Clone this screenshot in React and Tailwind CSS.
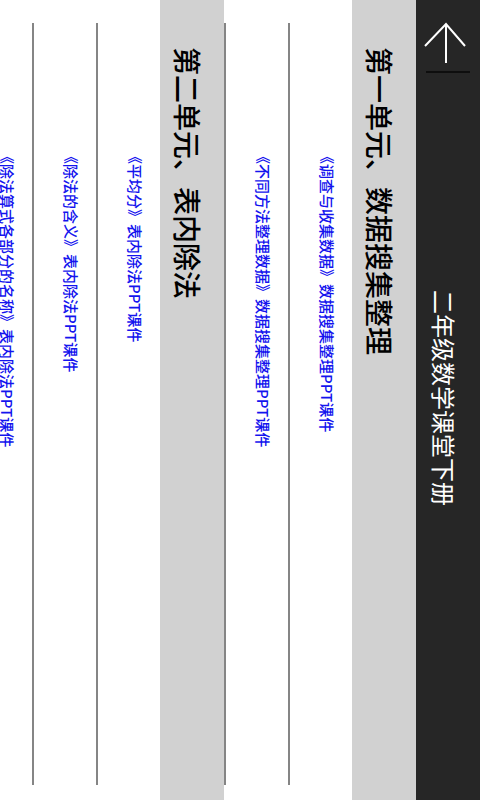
import React from 'react';

const FONT = { fontFamily: '"Noto Sans CJK SC", "Noto Sans", sans-serif' };

const sections = [
  {
    title: '第一单元、数据搜集整理',
    links: [
      '《调查与收集数据》数据搜集整理PPT课件',
      '《不同方法整理数据》数据搜集整理PPT课件',
    ],
  },
  {
    title: '第二单元、表内除法',
    links: [
      '《平均分》表内除法PPT课件',
      '《除法的含义》表内除法PPT课件',
      '《除法算式各部分的名称》表内除法PPT课件',
    ],
  },
];

function Vertical({ className, children }) {
  return (
    <span className={`[writing-mode:vertical-rl] [text-orientation:sideways] whitespace-nowrap ${className}`}>
      {children}
    </span>
  );
}

function Header() {
  return (
    <div className="flex w-[64px] shrink-0 flex-col items-center bg-[#262626]">
      <svg width="64" height="68" viewBox="0 0 64 68" className="shrink-0">
        <path d="M30 24 L30 63 M9 46 L30 24 L49 46" fill="none" stroke="#ffffff" strokeWidth="2" />
      </svg>
      <div className="mt-[3px] h-[2px] w-[44px] bg-[#0e0e0e]" />
      <div className="mt-[217px] flex w-full justify-center pr-[8px]">
        <Vertical className="text-[24px] leading-[28px] text-white">二年级数学课堂下册</Vertical>
      </div>
    </div>
  );
}

function SectionTitle({ children }) {
  return (
    <div className="flex w-[64px] shrink-0 justify-center bg-[#d1d1d1] pr-[9px] pt-[47px]">
      <Vertical className="text-[28px] font-medium leading-[32px] text-black">{children}</Vertical>
    </div>
  );
}

function LinkRow({ children }) {
  return (
    <div className="flex w-[64px] shrink-0">
      <div className="mb-[15px] mt-[23px] w-[2px] shrink-0 bg-[#858585]" />
      <div className="flex flex-1 justify-center pl-[12px] pt-[149px]">
        <Vertical className="text-[15px] font-medium leading-[20px] text-[#1414ee]">{children}</Vertical>
      </div>
    </div>
  );
}

export default function App() {
  return (
    <div className="flex h-[800px] w-[480px] flex-row-reverse overflow-hidden bg-white" style={FONT}>
      <Header />
      {sections.map((s) => (
        <React.Fragment key={s.title}>
          <SectionTitle>{s.title}</SectionTitle>
          {s.links.map((l) => (
            <LinkRow key={l}>{l}</LinkRow>
          ))}
        </React.Fragment>
      ))}
    </div>
  );
}
